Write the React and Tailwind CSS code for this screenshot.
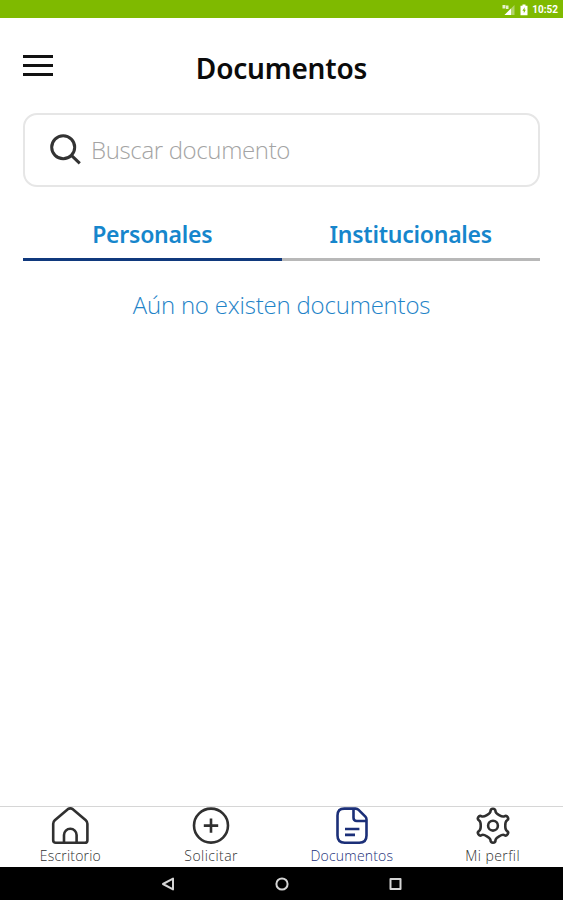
import { useState } from 'react';

const TABS = [
  { id: 'personales', label: 'Personales' },
  { id: 'institucionales', label: 'Institucionales' },
];

const NAV_ITEMS = [
  { id: 'escritorio', label: 'Escritorio', Icon: HomeIcon, text: 'tracking-[0.2px]' },
  { id: 'solicitar', label: 'Solicitar', Icon: PlusIcon, text: 'tracking-[0.45px]' },
  { id: 'documentos', label: 'Documentos', Icon: FileIcon, text: 'tracking-[0.2px]' },
  { id: 'perfil', label: 'Mi perfil', Icon: GearIcon, text: 'tracking-[0.45px]' },
];

function HomeIcon() {
  return (
    <svg width="40" height="38" viewBox="0 0 40 38" fill="none" stroke="currentColor" strokeWidth="2.6" strokeLinejoin="round">
      <path d="M17.8 2.2Q20.3.6 22.8 2.2L35.8 13.2Q37.4 14.6 37.4 16.8V33.2Q37.4 35.8 34.8 35.8H5.8Q3.2 35.8 3.2 33.2V16.8Q3.2 14.6 4.8 13.2Z" />
      <path d="M14 35.6V28a6.3 6.3 0 0 1 12.6 0V35.6" />
    </svg>
  );
}

function PlusIcon() {
  return (
    <svg width="40" height="38" viewBox="0 0 40 38" fill="none" stroke="currentColor" strokeWidth="2.6">
      <circle cx="20" cy="18.6" r="17" />
      <path d="M20 11.4v14.4M12.8 18.6h14.4" />
    </svg>
  );
}

function FileIcon() {
  return (
    <svg width="40" height="38" viewBox="0 0 40 38" fill="none" stroke="currentColor" strokeWidth="2.6" strokeLinejoin="round">
      <path d="M12.3 1.6H23.5Q25.3 1.6 26.6 2.9L33.4 9.7Q34.5 10.8 34.5 12.6V28.6Q34.5 35.8 27.3 35.8H12.7Q5.5 35.8 5.5 28.6V8.6Q5.5 1.6 12.3 1.6Z" />
      <path d="M21.5 2V10.8Q21.5 14 24.7 14H34.2" />
      <path d="M13 22h14.4M13 27.9h10" />
    </svg>
  );
}

function GearIcon() {
  return (
    <svg width="40" height="38" viewBox="0 0 40 38" fill="none" stroke="currentColor" strokeWidth="2.6" strokeLinejoin="round">
      <path
        transform="translate(20 18.7)"
        d="M-2.5-14.5A2.5 2.5 0 0 1 2.5-14.5C2.5-12.1 9.23-8.21 11.31-9.41A2.5 2.5 0 0 1 13.81-5.08C11.73-3.88 11.73 3.88 13.81 5.08A2.5 2.5 0 0 1 11.31 9.41C9.23 8.21 2.5 12.1 2.5 14.5A2.5 2.5 0 0 1-2.5 14.5C-2.5 12.1-9.23 8.21-11.31 9.41A2.5 2.5 0 0 1-13.81 5.08C-11.73 3.88-11.73-3.88-13.81-5.08A2.5 2.5 0 0 1-11.31-9.41C-9.23-8.21-2.5-12.1-2.5-14.5Z"
      />
      <circle cx="20" cy="18.7" r="4.9" />
    </svg>
  );
}

function StatusBar() {
  return (
    <div className="flex h-[18px] shrink-0 items-center justify-end bg-[#7fba00] pt-px pr-[5px] text-white">
      <svg width="13" height="12" viewBox="0 0 13 12" fill="currentColor" className="mr-[5px]">
        <path d="M12.5 1v10H2.5Z" opacity=".4" />
        <path d="M9 4.5v6.5H2.5Z" />
        <path d="M.5 1h3v3.5h-3zM4 1.5h2.5V5H4z" opacity=".8" />
      </svg>
      <svg width="8" height="12" viewBox="0 0 8 12" fill="currentColor" className="mr-[4px]">
        <path d="M2.5.5h3V1.7H7.5v9.6H.5V1.7h2Z" />
        <path d="M4.7 3.3 2.4 6.8h1.4v2.4l2-3.4H4.5Z" fill="#7fba00" />
      </svg>
      <span className="font-['Roboto',sans-serif] text-[10px] leading-none font-bold">10:52</span>
    </div>
  );
}

function SystemBar() {
  return (
    <div className="flex h-[33px] shrink-0 items-center justify-center gap-[98px] bg-black text-[#d4d4d4]">
      <svg width="16" height="16" viewBox="0 0 16 16" fill="none" stroke="currentColor" strokeWidth="2" strokeLinejoin="round">
        <path d="M13 2.6v10.8L3 8Z" />
      </svg>
      <svg width="16" height="16" viewBox="0 0 16 16" fill="none" stroke="currentColor" strokeWidth="2">
        <circle cx="8" cy="8" r="5.6" />
      </svg>
      <svg width="16" height="16" viewBox="0 0 16 16" fill="none" stroke="currentColor" strokeWidth="2" strokeLinejoin="round">
        <path d="M2.5 3h10v10h-10Z" />
      </svg>
    </div>
  );
}

export default function App() {
  const [tab, setTab] = useState('personales');
  const [active, setActive] = useState('documentos');

  return (
    <div className="flex h-screen w-full flex-col overflow-hidden bg-white font-['Noto_Sans',sans-serif]">
      <StatusBar />

      <header className="grid h-[95px] shrink-0 grid-cols-[1fr_auto_1fr] items-center px-[23px]">
        <button aria-label="Menu" className="flex w-[30px] flex-col gap-[6px]">
          <span className="h-[3px] bg-[#111]" />
          <span className="h-[3px] bg-[#111]" />
          <span className="h-[3px] bg-[#111]" />
        </button>
        <h1 className="pt-[4px] text-[28px] leading-none font-semibold tracking-[-0.2px] text-[#0b0b0b]">
          Documentos
        </h1>
      </header>

      <main className="flex flex-1 flex-col px-[23px]">
        <label className="flex h-[74px] items-center rounded-[14px] border-2 border-[#e6e6e6] pl-[24px]">
          <svg width="34" height="34" viewBox="0 0 34 34" fill="none" stroke="#333" strokeWidth="3">
            <circle cx="14.2" cy="14.2" r="11.5" />
            <path d="m22.4 22.4 8.4 8" />
          </svg>
          <input
            type="text"
            placeholder="Buscar documento"
            className="ml-[8px] w-[400px] bg-transparent font-['Open_Sans',sans-serif] text-[24px] font-light tracking-[-0.35px] outline-none placeholder:text-[#a4a4a4]"
          />
        </label>

        <div className="mt-[20px] grid grid-cols-2">
          {TABS.map(({ id, label }) => (
            <button
              key={id}
              onClick={() => setTab(id)}
              className={`h-[54px] border-b-[3px] pt-[4px] text-[23px] leading-none font-semibold tracking-[-0.25px] text-[#1686cc] ${
                tab === id ? 'border-[#10397d]' : 'border-[#b8b8b8]'
              }`}
            >
              {label}
            </button>
          ))}
        </div>

        <p className="mt-[28px] text-center font-['Open_Sans',sans-serif] text-[24px] leading-[32px] font-light tracking-[-0.2px] text-[#1f84c8]">
          Aún no existen documentos
        </p>
      </main>

      <nav className="grid h-[61px] shrink-0 grid-cols-4 border-t border-[#d6d6d6]">
        {NAV_ITEMS.map(({ id, label, Icon, text }) => (
          <button
            key={id}
            onClick={() => setActive(id)}
            className={`flex flex-col items-center ${active === id ? 'text-[#1b2f78]' : 'text-[#303030]'}`}
          >
            <Icon />
            <span className={`mt-[3px] font-['Open_Sans',sans-serif] text-[14px] leading-[16px] font-light ${text}`}>
              {label}
            </span>
          </button>
        ))}
      </nav>

      <SystemBar />
    </div>
  );
}
